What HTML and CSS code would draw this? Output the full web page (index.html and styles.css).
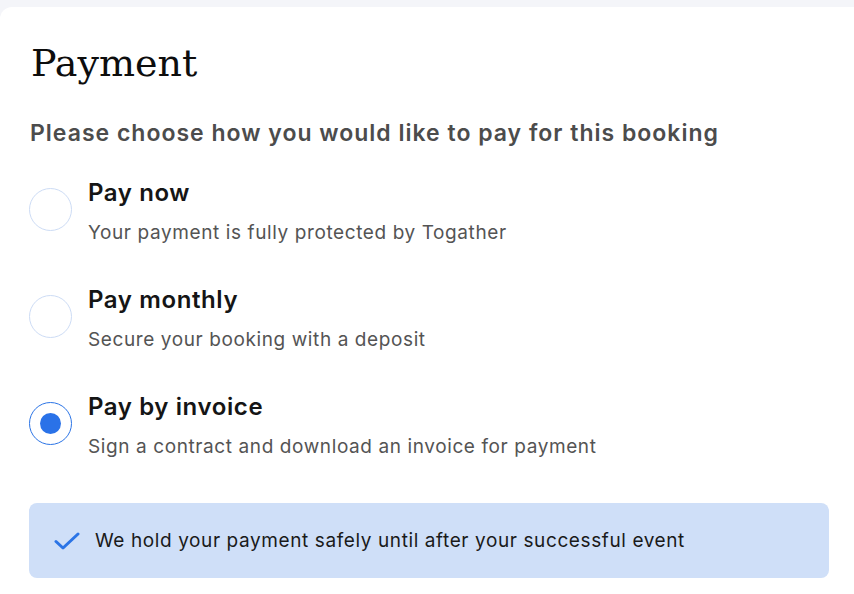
FILE: index.html
```html
<!DOCTYPE html>
<html lang="en">
<head>
    <meta charset="utf-8">
    <title>Payment</title>
    <link rel="stylesheet" href="styles.css">
</head>
<body>
    <div class="card">
        <h1 class="card-title">Payment</h1>
        <p class="card-lead">Please choose how you would like to pay for this booking</p>

        <!-- Payment options -->
        <div class="options">
            <label class="option">
                <span class="radio"></span>
                <span class="option-text">
                    <span class="option-name">Pay now</span>
                    <span class="option-desc">Your payment is fully protected by Togather</span>
                </span>
            </label>
            <label class="option">
                <span class="radio"></span>
                <span class="option-text">
                    <span class="option-name">Pay monthly</span>
                    <span class="option-desc">Secure your booking with a deposit</span>
                </span>
            </label>
            <label class="option">
                <span class="radio checked"></span>
                <span class="option-text">
                    <span class="option-name">Pay by invoice</span>
                    <span class="option-desc">Sign a contract and download an invoice for payment</span>
                </span>
            </label>
        </div>

        <!-- Info banner -->
        <div class="notice">
            <svg class="notice-icon" width="26" height="18" viewBox="0 0 26 18" fill="none">
                <path d="M2 9.5 L9 16 L24 2" stroke="#2b74e6" stroke-width="3" stroke-linecap="round" stroke-linejoin="round"/>
            </svg>
            <span>We hold your payment safely until after your successful event</span>
        </div>
    </div>
</body>
</html>
```

FILE: styles.css
```css
/* General Styles */
body {
    margin: 0;
    padding: 7px 0 0 0;
    background-color: #f4f5f9;
    font-family: Inter, "Noto Sans", sans-serif;
    color: #151515;
}

.card {
    background-color: #ffffff;
    border-top-left-radius: 12px;
    padding: 34px 25px 24px 29px;
}

.card-title {
    margin: 0 0 0 2px;
    font-family: "DejaVu Serif", "Liberation Serif", serif;
    font-size: 38px;
    font-weight: normal;
    line-height: 44px;
    color: #0d0d0d;
}

.card-lead {
    margin: 33px 0 0 1px;
    font-size: 23px;
    font-weight: 600;
    line-height: 30px;
    letter-spacing: 1px;
    color: #4c4c4c;
}

/* Options */
.options {
    display: flex;
    flex-direction: column;
    gap: 39px;
    margin-top: 30px;
}

.option {
    display: flex;
    align-items: flex-start;
    gap: 16px;
    cursor: pointer;
}

.radio {
    box-sizing: border-box;
    flex: 0 0 43px;
    width: 43px;
    height: 43px;
    margin-top: 10px;
    border: 1px solid #cddcf5;
    border-radius: 50%;
    display: flex;
    align-items: center;
    justify-content: center;
}

.radio.checked {
    border-color: #2b74e6;
}

.radio.checked::after {
    content: "";
    width: 21px;
    height: 21px;
    border-radius: 50%;
    background-color: #2a72e8;
}

.option-text {
    display: flex;
    flex-direction: column;
    gap: 12px;
}

.option-name {
    font-size: 24px;
    font-weight: 600;
    line-height: 30px;
    letter-spacing: 0.6px;
    color: #151515;
}

.option-desc {
    font-size: 19px;
    line-height: 26px;
    letter-spacing: 0.6px;
    color: #545454;
}

/* Notice */
.notice {
    display: flex;
    align-items: center;
    gap: 15px;
    height: 75px;
    margin-top: 43px;
    padding: 0 25px;
    box-sizing: border-box;
    background-color: #cfdff8;
    border-radius: 8px;
    font-size: 19px;
    letter-spacing: 0.6px;
    color: #1a1a1a;
}

.notice-icon {
    flex: 0 0 auto;
}
```
